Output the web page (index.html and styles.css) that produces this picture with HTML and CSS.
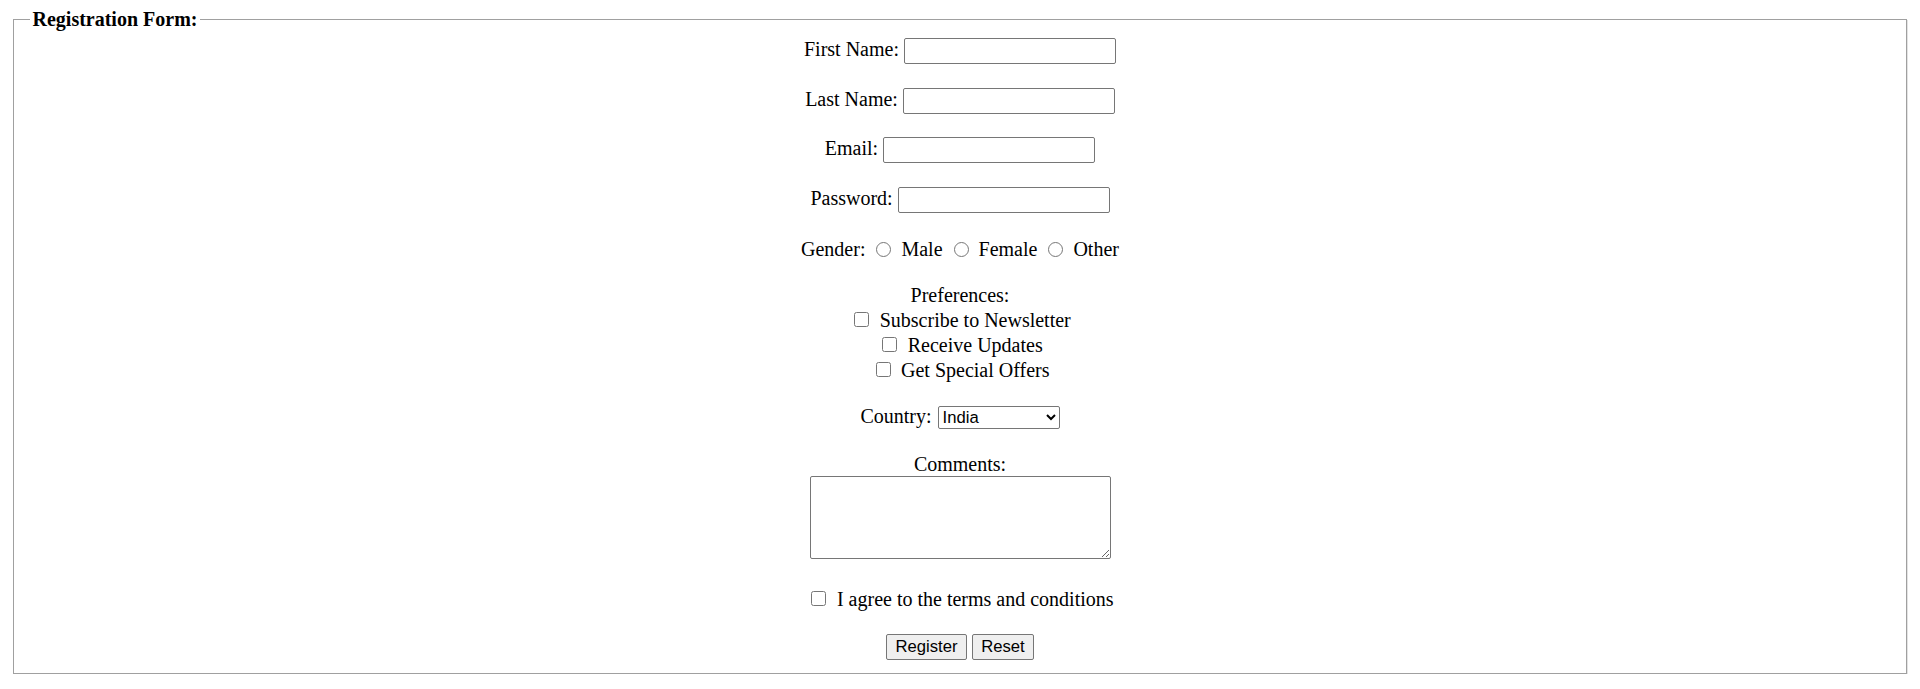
FILE: index.html
```html
<!DOCTYPE html>
<html lang="en">
<head>
<meta charset="utf-8">
<title>Registration Form</title>
<link rel="stylesheet" href="styles.css">
</head>
<body>
<form class="reg-form">
  <fieldset class="reg">
    <legend class="reg-legend">Registration Form:</legend>
    <div class="form-body">
      <div class="field">
        <label for="fname">First Name:</label>
        <input class="text-input" type="text" id="fname" name="fname">
      </div>
      <div class="field">
        <label for="lname">Last Name:</label>
        <input class="text-input" type="text" id="lname" name="lname">
      </div>
      <div class="field">
        <label for="email">Email:</label>
        <input class="text-input" type="email" id="email" name="email">
      </div>
      <div class="field">
        <label for="pwd">Password:</label>
        <input class="text-input" type="password" id="pwd" name="pwd">
      </div>
      <div class="gender-row">
        <span>Gender:</span>
        <input class="radio" type="radio" id="male" name="gender" value="male">
        <label for="male">Male</label>
        <input class="radio" type="radio" id="female" name="gender" value="female">
        <label for="female">Female</label>
        <input class="radio" type="radio" id="other" name="gender" value="other">
        <label for="other">Other</label>
      </div>
      <div class="pref-title">Preferences:</div>
      <div class="check-row">
        <input class="check" type="checkbox" id="news" name="news">
        <label for="news">Subscribe to Newsletter</label>
      </div>
      <div class="check-row">
        <input class="check" type="checkbox" id="updates" name="updates">
        <label for="updates">Receive Updates</label>
      </div>
      <div class="check-row">
        <input class="check" type="checkbox" id="offers" name="offers">
        <label for="offers">Get Special Offers</label>
      </div>
      <div class="country-row">
        <label for="country">Country:</label>
        <select class="select" id="country" name="country">
          <option>India</option>
          <option>USA</option>
          <option>UK</option>
          <option>Canada</option>
          <option>Australia</option>
        </select>
      </div>
      <label class="comments-title" for="comments">Comments:</label>
      <textarea class="comments" id="comments" name="comments"></textarea>
      <div class="check-row agree-row">
        <input class="check" type="checkbox" id="agree" name="agree">
        <label for="agree">I agree to the terms and conditions</label>
      </div>
      <div class="button-row">
        <button class="btn btn-register" type="submit">Register</button>
        <button class="btn btn-reset" type="reset">Reset</button>
      </div>
    </div>
  </fieldset>
</form>
</body>
</html>
```
FILE: styles.css
```css
html, body {
  background: #ffffff;
}

body {
  margin: 8px;
  font-family: "Liberation Serif", "Times New Roman", serif;
  font-size: 20px;
  line-height: 23px;
  color: #000000;
}

.reg-form {
  margin: 0;
}

.reg {
  margin: 0 5px;
  padding: 0 16px 13px;
  border: 1px solid #a0a0a0;
  box-shadow: 1px 1px 0 #e3e3e3;
  min-width: 0;
}

.reg-legend {
  padding: 0 2.5px;
  font-weight: bold;
  line-height: 23px;
}

.form-body {
  display: flex;
  flex-direction: column;
  align-items: center;
  padding-top: 7px;
}

.field {
  display: flex;
  align-items: baseline;
  gap: 5px;
  height: 26px;
}

.field + .field {
  margin-top: 23.5px;
}

.text-input {
  box-sizing: border-box;
  width: 212px;
  height: 26px;
  margin: 0;
  padding: 1px 2px;
  border: 1px solid #767676;
  border-radius: 2px;
  background: #ffffff;
  font-family: "Liberation Sans", Arial, sans-serif;
  font-size: 16.67px;
}

.gender-row {
  display: flex;
  align-items: center;
  height: 26px;
  margin-top: 23.5px;
}

.radio {
  width: 15px;
  height: 15px;
  margin: 0 10px 0 11px;
}

.pref-title {
  margin-top: 22px;
  height: 24px;
}

.check-row {
  display: flex;
  align-items: center;
  gap: 10.5px;
  height: 25px;
}

.check {
  width: 15px;
  height: 15px;
  margin: 0 0 1.5px 5px;
}

.country-row {
  display: flex;
  align-items: center;
  gap: 6px;
  height: 23px;
  margin-top: 23px;
}

.country-row label {
  margin-bottom: 2px;
}

.select {
  box-sizing: border-box;
  width: 122px;
  height: 23px;
  margin: 0;
  border: 1px solid #767676;
  border-radius: 2px;
  background-color: #ffffff;
  font-family: "Liberation Sans", Arial, sans-serif;
  font-size: 16.67px;
  color: #000000;
}

.comments-title {
  display: block;
  margin-top: 23.5px;
  height: 23px;
}

.comments {
  box-sizing: border-box;
  display: block;
  width: 301px;
  height: 83px;
  margin: 0;
  border: 1px solid #767676;
  border-radius: 2px;
  font-family: "Liberation Mono", monospace;
  font-size: 16.67px;
}

.agree-row {
  margin-top: 28px;
}

.button-row {
  display: flex;
  gap: 5px;
  margin-top: 22.5px;
}

.btn {
  box-sizing: border-box;
  height: 26px;
  margin: 0;
  padding: 0 7.5px;
  border: 1px solid #767676;
  border-radius: 2px;
  background: #efefef;
  font-family: "Liberation Sans", Arial, sans-serif;
  font-size: 16.67px;
  color: #000000;
}

.btn-register {
  width: 81px;
}

.btn-reset {
  width: 62px;
}
```
